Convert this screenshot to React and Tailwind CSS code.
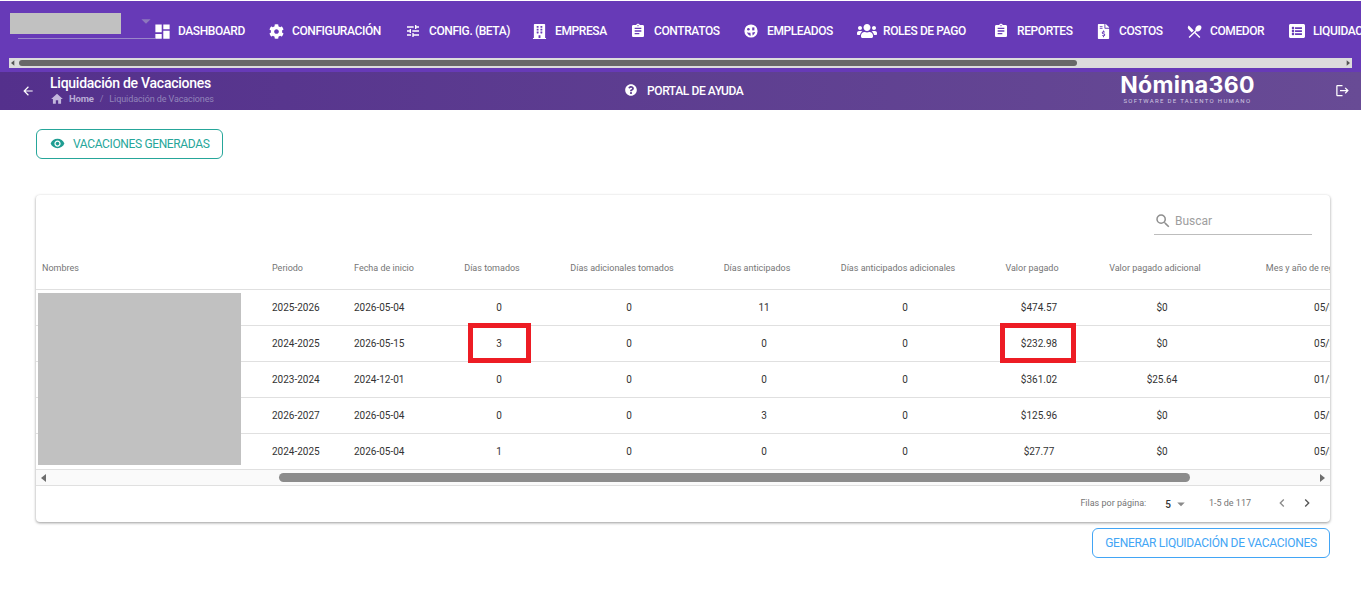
import React from "react";
import {
  MdDashboard, MdTune, MdHome, MdArrowBack, MdVisibility, MdSearch, MdArrowDropDown, MdChevronLeft, MdChevronRight,
  MdLogout, MdRestaurantMenu, MdAssignment,
} from "react-icons/md";
import { FaCog, FaBuilding, FaUsers, FaFileInvoiceDollar, FaListAlt, FaQuestionCircle } from "react-icons/fa";

function EmployeeIcon({ size, className }) {
  return (
    <svg width={size} height={size} viewBox="0 0 14 14" className={className}>
      <circle cx="7" cy="7" r="6.6" fill="currentColor" />
      <circle cx="4.4" cy="5.2" r="1.3" fill="#673ab7" />
      <path d="M8.2 3.4h2.2v3H8.2z" fill="#673ab7" />
      <path d="M3 8.2c1.4.6 2.6.7 3.4.6l.4 3c-1.800 0-3-1.400-3.800-3.600zM8.300 8.400l2.900-.4c-.4 1.500-1.300 2.800-2.600 3.400z" fill="#673ab7" />
    </svg>
  );
}

const nav = [
  [MdDashboard, "DASHBOARD", 19, "w-[114px]"],
  [FaCog, "CONFIGURACIÓN", 15, "w-[137px]"],
  [MdTune, "CONFIG. (BETA)", 16, "w-[126px]"],
  [FaBuilding, "EMPRESA", 15, "w-[99px]"],
  [MdAssignment, "CONTRATOS", 16, "w-[113px]"],
  [EmployeeIcon, "EMPLEADOS", 14, "w-[116px]"],
  [FaUsers, "ROLES DE PAGO", 20, "w-[134px]"],
  [MdAssignment, "REPORTES", 16, "w-[102px]"],
  [FaFileInvoiceDollar, "COSTOS", 15, "w-[91px]"],
  [MdRestaurantMenu, "COMEDOR", 17, "w-[103px]"],
  [FaListAlt, "LIQUIDACIONES", 16, "w-[140px]"],
];

const cols = [230, 82, 94, 114, 146, 124, 158, 110, 136, 206];
const headers = ["Nombres", "Periodo", "Fecha de inicio", "Días tomados", "Días adicionales tomados", "Días anticipados", "Días anticipados adicionales", "Valor pagado", "Valor pagado adicional", "Mes y año de registro de pago"];
const rows = [
  ["2025-2026", "2026-05-04", "0", "0", "11", "0", "$474.57", "$0", "05/2026"],
  ["2024-2025", "2026-05-15", "3", "0", "0", "0", "$232.98", "$0", "05/2026"],
  ["2023-2024", "2024-12-01", "0", "0", "0", "0", "$361.02", "$25.64", "01/2025"],
  ["2026-2027", "2026-05-04", "0", "0", "3", "0", "$125.96", "$0", "05/2026"],
  ["2024-2025", "2026-05-04", "1", "0", "0", "0", "$27.77", "$0", "05/2026"],
];

function Triangle({ dir, className }) {
  return (
    <svg width="6" height="8" viewBox="0 0 6 8" className={className}>
      <path d={dir === "left" ? "M5 0v8L0 4z" : "M1 0v8l5-4z"} fill="currentColor" />
    </svg>
  );
}

export default function App() {
  return (
    <div className="w-[1361px] h-[616px] overflow-hidden bg-white text-[#333] font-['Roboto',sans-serif]">
      <div className="h-[71px] mt-px bg-[#673ab7] flex flex-col">
        <div className="h-[57px] flex items-start overflow-hidden">
          <div className="w-[155px] shrink-0 h-[38px] mt-[12px] ml-[10px] mr-[-10px] relative">
            <div className="w-[111px] h-[21px] bg-[#c1c1c1]" />
            <div className="absolute left-[8px] right-[10px] top-[25px] border-b border-[#9a86c9]" />
            <MdArrowDropDown size={22} className="absolute left-[125px] top-[-3px] text-[#8d78bd]" />
          </div>
          <div className="flex h-[57px] items-center pt-[3px]">
            {nav.map(([Icon, label, size, w]) => (
              <div key={label} className={`flex items-center shrink-0 ${w}`}>
                <span className="w-[14px] flex justify-center mr-[9px]"><Icon size={size} className="text-white shrink-0" /></span>
                <span className="text-[12px] font-medium text-white tracking-[-0.4px] whitespace-nowrap">{label}</span>
              </div>
            ))}
          </div>
        </div>
        <div className="h-[10px] mx-[9px] bg-[#dcdcdc] flex items-center px-[1px]">
          <Triangle dir="left" className="text-[#555] w-[4px] h-[6px] ml-[1px]" />
          <div className="h-[6px] w-[1058px] ml-[4px] rounded-full bg-[#686868]" />
          <div className="flex-1" />
          <Triangle dir="right" className="text-[#555] w-[4px] h-[6px] mr-[1px]" />
        </div>
      </div>

      <div className="h-[38px] bg-gradient-to-r from-[#54308c] to-[#684b95] flex items-center relative">
        <MdArrowBack size={14} className="text-white ml-[21px] shrink-0" />
        <div className="ml-[15px] w-[400px]">
          <div className="text-[14px] leading-[16px] font-medium text-white tracking-[-0.25px] mt-[-2px]">Liquidación de Vacaciones</div>
          <div className="flex items-center text-[9px] leading-[14px] mt-px text-[#9284ba]">
            <MdHome size={14} className="text-[#c3b7dc]" />
            <span className="ml-[5px] text-[9.5px] font-bold text-[#b9acd6] tracking-[-0.2px]">Home</span>
            <span className="mx-[6px] text-[#8f7eb8]">/</span>
            <span className="tracking-[-0.1px]">Liquidación de Vacaciones</span>
          </div>
        </div>
        <div className="flex items-center ml-[175px]">
          <FaQuestionCircle size={12} className="text-white mt-[-2px]" />
          <span className="ml-[10px] text-[12px] tracking-[-0.4px] font-medium text-white whitespace-nowrap">PORTAL DE AYUDA</span>
        </div>
        <div className="ml-[377px] w-[134px] flex flex-col items-center gap-[1px] mt-[-3px]">
          <div className="font-['Inter',sans-serif] text-[23px] leading-[21px] font-bold text-white tracking-[0.3px]">Nómina360</div>
          <div className="text-[6px] leading-[7px] tracking-[1.3px] text-[#cfc6e0] whitespace-nowrap">SOFTWARE DE TALENTO HUMANO</div>
        </div>
        <MdLogout size={15} className="text-white ml-[81px] mt-[-2px]" />
      </div>

      <div className="px-[36px] pt-[19px]">
        <button className="h-[30px] w-[187px] border border-[#26a69a] rounded-[6px] flex items-center text-[#26a69a] text-[12px] bg-white">
          <MdVisibility size={15} className="ml-[13px] text-[#1f9d92] mt-[-2px]" />
          <span className="ml-[8px] whitespace-nowrap tracking-[-0.36px]">VACACIONES GENERADAS</span>
        </button>

        <div className="mt-[36px] h-[327px] w-[1294px] rounded-[4px] bg-white shadow-[0_1px_3px_rgba(0,0,0,0.4)] overflow-hidden relative flex flex-col">
          <div className="h-[50px] flex justify-end shrink-0 pt-[14px] pr-[18px]">
            <div className="w-[158px] h-[26px] border-b border-[#bdbdbd] flex items-center text-[#9e9e9e]">
              <MdSearch size={18} className="text-[#8f8f8f] mt-[-2px]" />
              <span className="ml-[3px] text-[12px] mt-[-2px]">Buscar</span>
            </div>
          </div>
          <div className="h-[225px] overflow-hidden relative shrink-0">
            <table className="table-fixed border-collapse w-[1400px] text-[10px]">
              <colgroup>
                {cols.map((w, i) => <col key={i} style={{ width: w }} />)}
              </colgroup>
              <thead>
                <tr className="h-[44px] border-b border-[#e0e0e0]">
                  {headers.map((h, i) => (
                    <th key={h} className={`font-normal text-[9px] pt-[3px] text-[#757575] whitespace-nowrap ${i < 3 ? "text-left pl-[6px]" : "text-center pr-[14px]"}`}>{h}</th>
                  ))}
                </tr>
              </thead>
              <tbody>
                {rows.map((r, i) => (
                  <tr key={i} className="h-[36px] border-b border-[#e0e0e0] text-[#333]">
                    <td />
                    {r.map((c, j) => (
                      <td key={j} className={`whitespace-nowrap ${j < 2 ? "text-left pl-[6px]" : "text-center"}`}>{c}</td>
                    ))}
                  </tr>
                ))}
              </tbody>
            </table>
            <div className="absolute left-[2px] top-[48px] w-[203px] h-[172px] bg-[#c1c1c1]" />
            <div className="absolute left-[432px] top-[78px] w-[63px] h-[40px] border-[5px] border-[#ed1c24]" />
            <div className="absolute left-[964px] top-[78px] w-[76px] h-[40px] border-[5px] border-[#ed1c24]" />
          </div>
          <div className="h-[16px] shrink-0 bg-[#fafafa] border-b border-[#e0e0e0] flex items-center px-[5px]">
            <Triangle dir="left" className="text-[#6e6e6e]" />
            <div className="ml-[232px] h-[9px] w-[911px] rounded-full bg-[#8c8c8c]" />
            <div className="flex-1" />
            <Triangle dir="right" className="text-[#6e6e6e]" />
          </div>
          <div className="flex-1 flex items-center justify-end text-[9px] text-[#757575] pr-[15px]">
            <span>Filas por página:</span>
            <span className="ml-[19px] text-[10px] font-medium text-[#333]">5</span>
            <MdArrowDropDown size={18} className="text-[#8a8a8a] ml-[1px]" />
            <span className="ml-[19px]">1-5 de 117</span>
            <MdChevronLeft size={16} className="ml-[23px] text-[#8a8a8a] mt-[-2px]" />
            <MdChevronRight size={16} className="ml-[9px] text-[#555] mt-[-2px]" />
          </div>
        </div>

        <div className="flex justify-end w-[1294px] mt-[6px]">
          <button className="h-[30px] w-[238px] border border-[#42a5f5] rounded-[6px] text-[#42a5f5] text-[12px] tracking-[-0.3px] bg-white whitespace-nowrap">GENERAR LIQUIDACIÓN DE VACACIONES</button>
        </div>
      </div>
    </div>
  );
}
